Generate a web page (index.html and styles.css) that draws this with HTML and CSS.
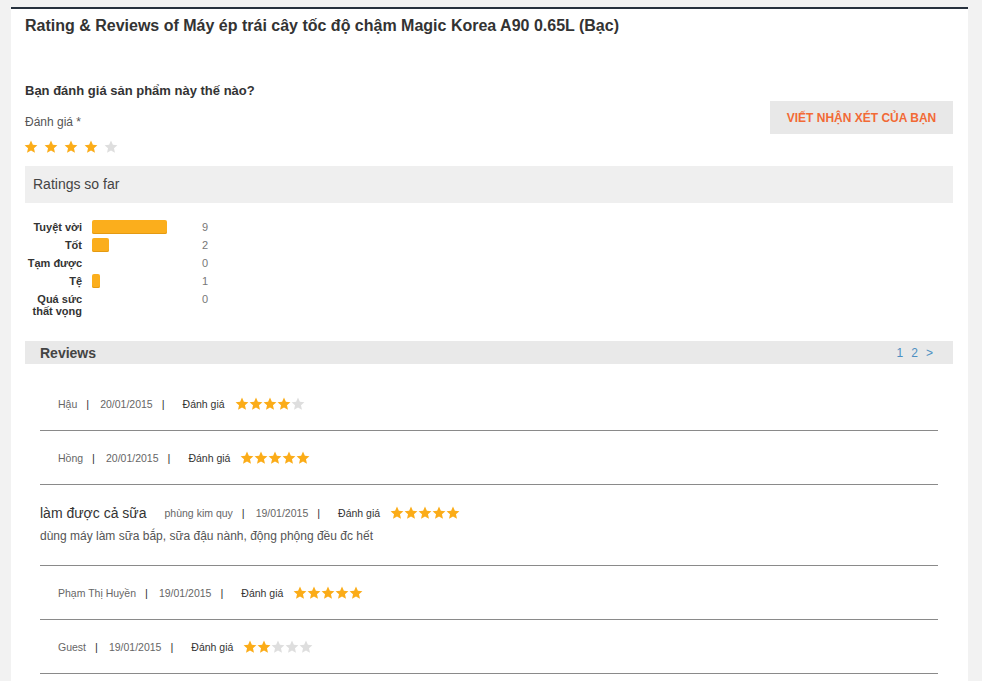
FILE: index.html
```html
<!DOCTYPE html>
<html lang="vi">
<head>
<meta charset="utf-8">
<title>Rating &amp; Reviews</title>
<link rel="stylesheet" href="styles.css">
</head>
<body>
<svg width="0" height="0" class="defs">
  <defs>
    <symbol id="star" viewBox="0 0 24 24">
      <polygon points="12,1 15.2,8.1 23,8.9 17.1,14.1 18.8,21.9 12,17.9 5.2,21.9 6.9,14.1 1,8.9 8.8,8.1"/>
    </symbol>
  </defs>
</svg>
<div class="page">
  <h1 class="title">Rating &amp; Reviews of Máy ép trái cây tốc độ chậm Magic Korea A90 0.65L (Bạc)</h1>

  <div class="ask">
    <div class="ask-left">
      <div class="question">Bạn đánh giá sản phẩm này thế nào?</div>
      <div class="label">Đánh giá *</div>
      <div class="big-stars">
        <svg class="bs on"><use href="#star"/></svg>
        <svg class="bs on"><use href="#star"/></svg>
        <svg class="bs on"><use href="#star"/></svg>
        <svg class="bs on"><use href="#star"/></svg>
        <svg class="bs off"><use href="#star"/></svg>
      </div>
    </div>
    <button class="write-btn">VIẾT NHẬN XÉT CỦA BẠN</button>
  </div>

  <div class="box-head">Ratings so far</div>

  <div class="dist">
    <div class="dist-row"><div class="dl">Tuyệt vời</div><div class="db"><span class="bar" style="width:75px"></span></div><div class="dc">9</div></div>
    <div class="dist-row"><div class="dl">Tốt</div><div class="db"><span class="bar" style="width:17px"></span></div><div class="dc">2</div></div>
    <div class="dist-row"><div class="dl">Tạm được</div><div class="db"></div><div class="dc">0</div></div>
    <div class="dist-row"><div class="dl">Tệ</div><div class="db"><span class="bar" style="width:8px"></span></div><div class="dc">1</div></div>
    <div class="dist-row"><div class="dl">Quá sức thất vọng</div><div class="db"></div><div class="dc">0</div></div>
  </div>

  <div class="rev-head">
    <span class="rev-title">Reviews</span>
    <span class="pager"><a>1</a><a>2</a><a>&gt;</a></span>
  </div>

  <div class="reviews">
    <div class="review">
      <div class="meta indent">
        <span class="name">Hậu</span><span class="pipe">|</span><span class="date">20/01/2015</span><span class="pipe">|</span><span class="rl">Đánh giá</span>
        <span class="stars"><svg class="s on"><use href="#star"/></svg><svg class="s on"><use href="#star"/></svg><svg class="s on"><use href="#star"/></svg><svg class="s on"><use href="#star"/></svg><svg class="s off"><use href="#star"/></svg></span>
      </div>
    </div>
    <div class="review">
      <div class="meta indent">
        <span class="name">Hồng</span><span class="pipe">|</span><span class="date">20/01/2015</span><span class="pipe">|</span><span class="rl">Đánh giá</span>
        <span class="stars"><svg class="s on"><use href="#star"/></svg><svg class="s on"><use href="#star"/></svg><svg class="s on"><use href="#star"/></svg><svg class="s on"><use href="#star"/></svg><svg class="s on"><use href="#star"/></svg></span>
      </div>
    </div>
    <div class="review">
      <div class="meta titled">
        <span class="rt">làm được cả sữa</span><span class="name">phùng kim quy</span><span class="pipe">|</span><span class="date">19/01/2015</span><span class="pipe">|</span><span class="rl">Đánh giá</span>
        <span class="stars"><svg class="s on"><use href="#star"/></svg><svg class="s on"><use href="#star"/></svg><svg class="s on"><use href="#star"/></svg><svg class="s on"><use href="#star"/></svg><svg class="s on"><use href="#star"/></svg></span>
      </div>
      <div class="body">dùng máy làm sữa bắp, sữa đậu nành, động phộng đều đc hết</div>
    </div>
    <div class="review">
      <div class="meta indent">
        <span class="name">Phạm Thị Huyền</span><span class="pipe">|</span><span class="date">19/01/2015</span><span class="pipe">|</span><span class="rl">Đánh giá</span>
        <span class="stars"><svg class="s on"><use href="#star"/></svg><svg class="s on"><use href="#star"/></svg><svg class="s on"><use href="#star"/></svg><svg class="s on"><use href="#star"/></svg><svg class="s on"><use href="#star"/></svg></span>
      </div>
    </div>
    <div class="review">
      <div class="meta indent">
        <span class="name">Guest</span><span class="pipe">|</span><span class="date">19/01/2015</span><span class="pipe">|</span><span class="rl">Đánh giá</span>
        <span class="stars"><svg class="s on"><use href="#star"/></svg><svg class="s on"><use href="#star"/></svg><svg class="s off"><use href="#star"/></svg><svg class="s off"><use href="#star"/></svg><svg class="s off"><use href="#star"/></svg></span>
      </div>
    </div>
  </div>
</div>
</body>
</html>
```

FILE: styles.css
```css
html, body {
  margin: 0;
  padding: 0;
  background: #f2f2f2;
  font-family: "Liberation Sans", Arial, sans-serif;
  color: #333;
}
.defs { position: absolute; width: 0; height: 0; overflow: hidden; }

.page {
  margin: 7px 14px 0 11px;
  background: #fff;
  border-top: 2px solid #27313d;
  padding: 7px 15px 40px 14px;
  min-height: 700px;
}

.title {
  margin: 0;
  font-size: 16px;
  line-height: 20px;
  font-weight: bold;
  color: #333;
}

.ask {
  display: flex;
  justify-content: space-between;
  align-items: flex-start;
  margin-top: 47px;
}
.question {
  font-size: 13px;
  line-height: 16px;
  font-weight: bold;
  color: #333;
}
.label {
  margin-top: 15px;
  font-size: 12px;
  line-height: 16px;
  color: #555;
}
.big-stars {
  display: flex;
  gap: 6px;
  margin-top: 10px;
  margin-left: -1px;
  height: 14px;
}
.bs { width: 14px; height: 14px; }
.on { fill: #fbac18; }
.off { fill: #dedede; }

.write-btn {
  margin-top: 18px;
  width: 183px;
  height: 33px;
  border: 0;
  background: #e8e8e8;
  color: #f26a36;
  font-family: "Liberation Sans", Arial, sans-serif;
  font-weight: bold;
  font-size: 12px;
  padding: 0;
}

.box-head {
  margin-top: 12px;
  height: 37px;
  line-height: 37px;
  background: #efefef;
  padding-left: 8px;
  font-size: 14px;
  color: #444;
}

.dist {
  margin-top: 17px;
  display: flex;
  flex-direction: column;
  gap: 4px;
}
.dist-row {
  display: flex;
  align-items: flex-start;
  min-height: 14px;
}
.dl {
  width: 57px;
  text-align: right;
  font-size: 11px;
  font-weight: bold;
  line-height: 12px;
  padding-top: 1px;
  color: #333;
}
.db {
  width: 110px;
  margin-left: 10px;
  height: 14px;
}
.bar {
  display: block;
  height: 14px;
  background: #fbae1c;
  border-radius: 2px;
  box-shadow: inset 0 -1px 0 #e49a12;
}
.dc {
  font-size: 11px;
  line-height: 13px;
  height: 13px;
  color: #777;
  padding-top: 1px;
}

.rev-head {
  margin-top: 24px;
  height: 23px;
  background: #e9e9e9;
  display: flex;
  align-items: center;
  justify-content: space-between;
  padding: 0 20px 0 15px;
}
.rev-title {
  font-size: 14px;
  font-weight: bold;
  color: #444;
}
.pager {
  display: flex;
  gap: 8px;
  font-size: 12px;
  color: #4d8fc2;
}

.reviews {
  margin: 13px 15px 0;
}
.review {
  padding: 20px 0 19px;
  border-bottom: 1px solid #8a8a8a;
}
.meta {
  display: flex;
  align-items: center;
  height: 14px;
  font-size: 10.5px;
  color: #666;
}
.meta.indent { padding-left: 18px; }
.meta.titled { height: 16px; }
.rt {
  font-size: 14px;
  color: #333;
  margin-right: 18px;
}
.pipe {
  color: #333;
  font-size: 11px;
  margin: 0 11px 0 9px;
}
.pipe + .rl { margin-left: 7px; }
.rl { color: #333; }
.stars {
  display: flex;
  margin-left: 10px;
}
.s { width: 14px; height: 14px; }
.body {
  margin-top: 7px;
  font-size: 12px;
  line-height: 16px;
  color: #555;
  padding-bottom: 2px;
}
```
